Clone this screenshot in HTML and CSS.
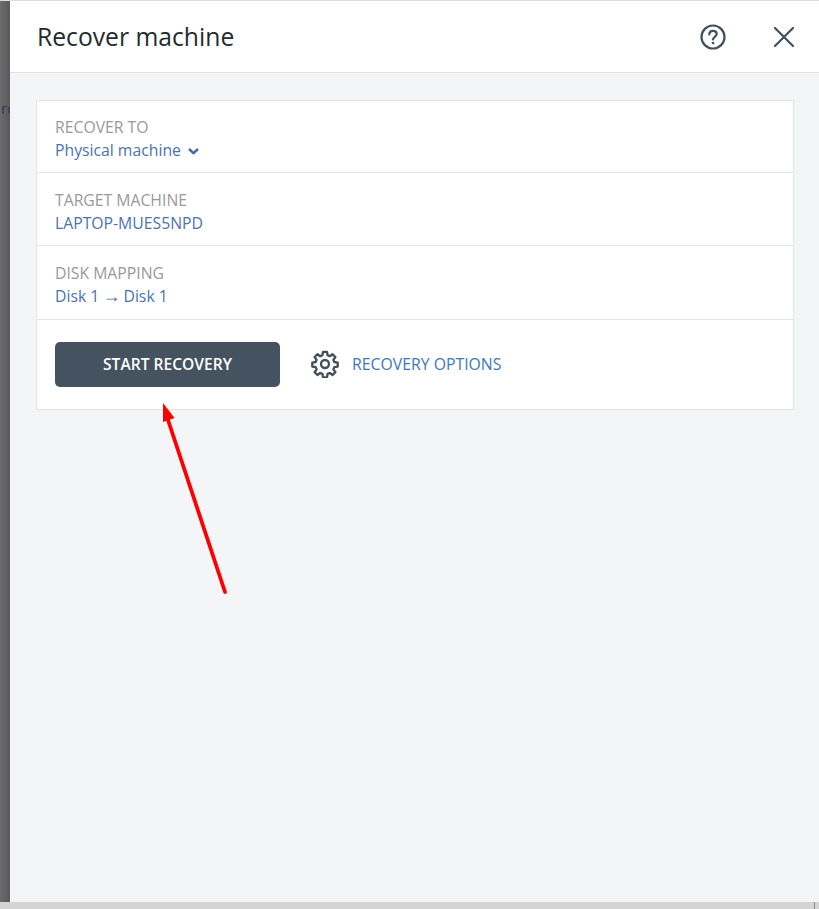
FILE: index.html
```html
<!DOCTYPE html>
<html lang="en">
<head>
    <meta charset="UTF-8">
    <meta name="viewport" content="width=device-width, initial-scale=1.0">
    <title>Recover machine</title>
    <link rel="stylesheet" href="styles.css">
</head>
<body>
    <div class="window">
        <div class="backdrop"><span class="backdrop-text">rc</span></div>

        <div class="panel">
            <header class="panel-header">
                <h1>Recover machine</h1>
                <div class="header-icons">
                    <svg class="icon-help" width="26" height="26" viewBox="0 0 26 26" fill="none" stroke="#434f5c" stroke-width="2.2" stroke-linecap="round">
                        <circle cx="13" cy="13" r="11.5"/>
                        <path d="M9.3 10.5c0-2.2 1.6-3.7 3.7-3.7s3.7 1.4 3.7 3.3c0 2.7-3.7 2.7-3.7 5.3"/>
                        <circle cx="13" cy="19" r="0.6" stroke-width="1.5" fill="#434f5c"/>
                    </svg>
                    <svg class="icon-close" width="22" height="22" viewBox="0 0 22 22" fill="none" stroke="#434f5c" stroke-width="2.2" stroke-linecap="round">
                        <path d="M2 2l18 18M20 2L2 20"/>
                    </svg>
                </div>
            </header>

            <main class="panel-body">
                <section class="card">
                    <div class="row row-first">
                        <div class="row-label">RECOVER TO</div>
                        <div class="row-value">Physical machine
                            <svg class="chevron" width="11" height="7" viewBox="0 0 11 7" fill="none" stroke="#3f68a6" stroke-width="2.4">
                                <path d="M1 1l4.5 4.2L10 1"/>
                            </svg>
                        </div>
                    </div>
                    <div class="row">
                        <div class="row-label">TARGET MACHINE</div>
                        <div class="row-value">LAPTOP-MUES5NPD</div>
                    </div>
                    <div class="row row-last">
                        <div class="row-label">DISK MAPPING</div>
                        <div class="row-value">Disk 1 <span class="arrow-glyph">→</span> Disk 1</div>
                    </div>
                    <div class="actions">
                        <button class="btn">START RECOVERY</button>
                        <a class="options-link">
                            <svg width="28" height="28" viewBox="0 0 24 24" fill="none" stroke="#434f5c" stroke-width="2" stroke-linejoin="round">
                                <circle cx="12" cy="12" r="3.4"/>
                                <path d="M10.3 1.6h3.4l.5 2.9 1.9.8 2.4-1.7 2.4 2.4-1.7 2.4.8 1.9 2.9.5v3.4l-2.9.5-.8 1.9 1.7 2.4-2.4 2.4-2.4-1.7-1.9.8-.5 2.9h-3.4l-.5-2.9-1.9-.8-2.4 1.7-2.4-2.4 1.7-2.4-.8-1.9-2.9-.5v-3.4l2.9-.5.8-1.9-1.7-2.4 2.4-2.4 2.4 1.7 1.9-.8z"/>
                            </svg>
                            <span>RECOVERY OPTIONS</span>
                        </a>
                    </div>
                </section>
            </main>
        </div>

        <!-- red annotation drawn on top of the screenshot -->
        <svg class="annotation" width="80" height="200" viewBox="0 0 80 200" fill="none">
            <path d="M76 190L19 18" stroke="#ff0000" stroke-width="3.8" stroke-linecap="round"/>
            <path d="M14 1L25.5 16L14 20Z" fill="#ff0000"/>
        </svg>
    </div>

    <div class="scrollbar"><span class="scroll-tick"></span></div>
</body>
</html>
```

FILE: styles.css
```css
* {
    margin: 0;
    padding: 0;
    box-sizing: border-box;
}

html, body {
    height: 100%;
    overflow: hidden;
}

body {
    font-family: "Open Sans", "Liberation Sans", sans-serif;
    display: flex;
    flex-direction: column;
    background-color: #d4d4d4;
    border-top: 1px solid #dcdde0;
}

.window {
    flex: 1;
    display: flex;
    position: relative;
    min-height: 0;
}

/* dimmed page behind the panel */
.backdrop {
    width: 10px;
    flex-shrink: 0;
    overflow: hidden;
    padding: 97px 0 0 1px;
    background: linear-gradient(to right, #6c6c6e, #58585a);
}

.backdrop-text {
    display: block;
    font-size: 15px;
    line-height: 20px;
    color: #2f3a52;
    white-space: nowrap;
}

.panel {
    flex: 1;
    display: flex;
    flex-direction: column;
    background-color: #f4f5f7;
}

.panel-header {
    height: 72px;
    flex-shrink: 0;
    display: flex;
    align-items: center;
    justify-content: space-between;
    background-color: #fff;
    border-bottom: 1px solid #e0e2e5;
    padding-left: 27px;
    padding-right: 24px;
}

h1 {
    font-size: 24.7px;
    font-weight: 400;
    color: #252a30;
}

.header-icons {
    display: flex;
    align-items: center;
    gap: 47px;
}

.panel-body {
    padding: 27px 25px 0 26px;
}

.card {
    background-color: #fff;
    border: 1px solid #e3e5e8;
}

.row {
    height: 73px;
    padding: 16px 18px 0;
    border-bottom: 1px solid #e3e5e8;
    font-size: 15.75px;
    line-height: 23px;
}

.row-first {
    height: 72px;
    padding-top: 15px;
}

.row-last {
    height: 74px;
}

.row-label {
    color: #99999b;
}

.row-value {
    color: #4a73b0;
}

.chevron {
    margin-left: 3px;
    vertical-align: 1px;
}

.arrow-glyph {
    font-family: "Liberation Sans", sans-serif;
    font-size: 18px;
    line-height: 1;
    margin: 0 -1px;
}

.actions {
    height: 89px;
    display: flex;
    align-items: center;
    padding-left: 18px;
    gap: 31px;
}

.btn {
    width: 225px;
    height: 45px;
    border: none;
    border-radius: 5px;
    background-color: #45525f;
    color: #fff;
    font-family: inherit;
    font-size: 15.6px;
    font-weight: 600;
    padding-bottom: 2px;
}

.options-link {
    display: flex;
    align-items: center;
    gap: 13px;
    font-size: 15.8px;
    color: #3f78b8;
    margin-top: -1px;
}

.annotation {
    position: absolute;
    left: 149px;
    top: 401px;
}

.scrollbar {
    height: 7px;
    flex-shrink: 0;
    display: flex;
    justify-content: flex-end;
    padding-right: 4px;
}

.scroll-tick {
    width: 1px;
    background-color: #8a8a8a;
}
```
